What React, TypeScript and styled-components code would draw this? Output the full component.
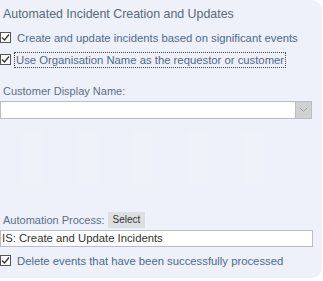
import styled, { createGlobalStyle } from 'styled-components';

const Global = createGlobalStyle`
  html, body {
    margin: 0;
    padding: 0;
    background: #ffffff;
  }
`;

const Panel = styled.div`
  width: 322px;
  height: 278px;
  box-sizing: border-box;
  background: #eef1f9;
  border-radius: 0 10px 10px 0;
  padding: 5px 0 0 0;
  font-family: 'Liberation Sans', Arial, sans-serif;
  display: flex;
  flex-direction: column;
`;

const Title = styled.div`
  font-size: 12.4px;
  color: #5b6878;
  padding-left: 3px;
  height: 18px;
  line-height: 18px;
`;

const CheckRow = styled.label<{ $mt?: number }>`
  display: flex;
  align-items: center;
  gap: 6px;
  margin-top: ${({ $mt }) => $mt ?? 0}px;
  height: 17px;
`;

const Box = styled.span`
  width: 11px;
  height: 11px;
  box-sizing: border-box;
  border: 1px solid #555;
  background: #fff;
  display: flex;
  align-items: center;
  justify-content: center;
  flex-shrink: 0;
`;

const CheckText = styled.span<{ $focus?: boolean }>`
  font-size: 11.3px;
  color: #4d6a8c;
  white-space: nowrap;
  padding: ${({ $focus }) => ($focus ? '1px 1px' : '0')};
  margin-left: ${({ $focus }) => ($focus ? '-3px' : '0')};
  border: ${({ $focus }) => ($focus ? '1px dotted #444' : 'none')};
`;

const Label = styled.div<{ $mt: number }>`
  font-size: 11px;
  color: #5b6f88;
  padding-left: 3px;
  margin-top: ${({ $mt }) => $mt}px;
  height: 16px;
  line-height: 16px;
  display: flex;
  align-items: center;
  gap: 3px;
`;

const SelectBox = styled.div`
  width: 312px;
  height: 18px;
  box-sizing: border-box;
  margin-top: 2px;
  background: #fff;
  border: 1px solid #b9bec6;
  display: flex;
  justify-content: flex-end;
`;

const Arrow = styled.div`
  width: 15px;
  height: 100%;
  background: #cfd1d4;
  border-left: 1px solid #b9bec6;
  display: flex;
  align-items: center;
  justify-content: center;
`;

const Ghosts = styled.div`
  display: flex;
  gap: 34px;
  padding-left: 22px;
  margin-top: 12px;
  height: 54px;
`;

const Ghost = styled.div`
  width: 21px;
  height: 100%;
  background: #f0f2fa;
`;

const SmallButton = styled.span`
  font-size: 10px;
  color: #333;
  background: #dedfe1;
  padding: 2px 5px;
  line-height: 12px;
`;

const TextInput = styled.div`
  width: 313px;
  height: 17px;
  box-sizing: border-box;
  margin-top: 2px;
  background: #fff;
  border: 1px solid #b9bec6;
  font-size: 11.3px;
  color: #333;
  line-height: 15px;
  padding-left: 1px;
`;

const Check = () => (
  <Box>
    <svg width="9" height="9" viewBox="0 0 9 9">
      <path d="M1 4.5 L3.5 7 L8 1.5" fill="none" stroke="#333" strokeWidth="1.3" />
    </svg>
  </Box>
);

export default function App() {
  return (
    <>
      <Global />
      <Panel>
        <Title>Automated Incident Creation and Updates</Title>
        <CheckRow $mt={6}>
          <Check />
          <CheckText>Create and update incidents based on significant events</CheckText>
        </CheckRow>
        <CheckRow $mt={5}>
          <Check />
          <CheckText $focus>Use Organisation Name as the requestor or customer</CheckText>
        </CheckRow>
        <Label $mt={15}>Customer Display Name:</Label>
        <SelectBox>
          <Arrow>
            <svg width="9" height="6" viewBox="0 0 9 6">
              <path d="M1 1 L4.5 4.5 L8 1" fill="none" stroke="#9ea2a8" strokeWidth="1" />
            </svg>
          </Arrow>
        </SelectBox>
        <Ghosts>
          {[0, 1, 2, 3, 4].map((i) => (
            <Ghost key={i} />
          ))}
        </Ghosts>
        <Label $mt={27}>
          Automation Process: <SmallButton>Select</SmallButton>
        </Label>
        <TextInput>IS: Create and Update Incidents</TextInput>
        <CheckRow $mt={5}>
          <Check />
          <CheckText>Delete events that have been successfully processed</CheckText>
        </CheckRow>
      </Panel>
    </>
  );
}
